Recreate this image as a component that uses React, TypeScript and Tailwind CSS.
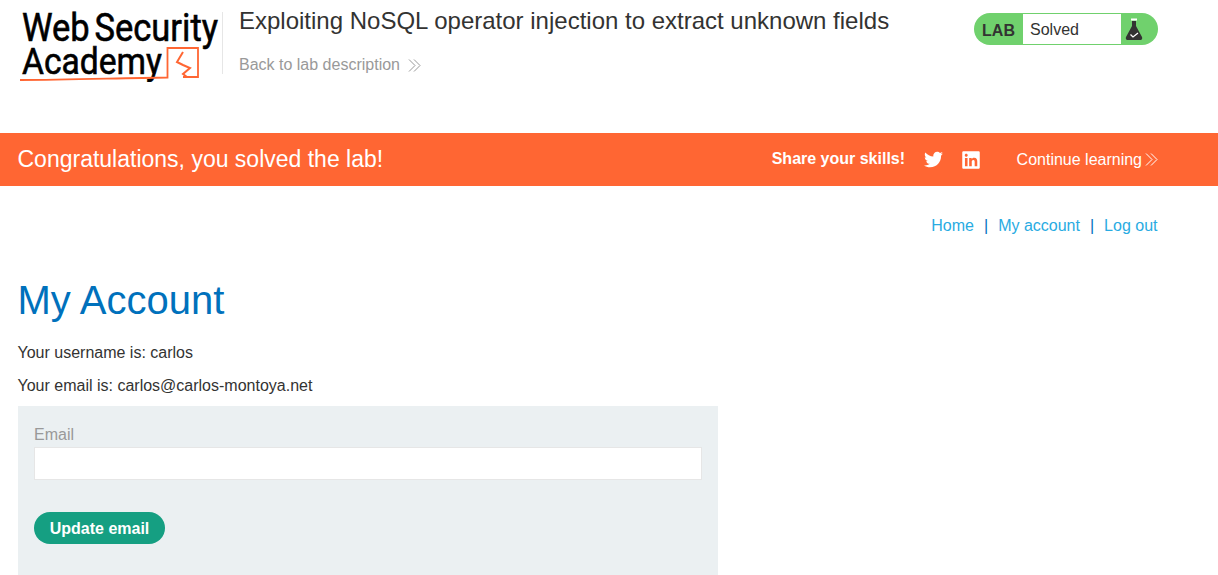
import { FaLinkedin, FaTwitter } from "react-icons/fa";

const sans = "font-['Liberation_Sans',Arial,sans-serif]";

function Chevrons({ className }: { className: string }) {
  return (
    <svg className={className} viewBox="0 0 13 14" fill="none" stroke="currentColor" strokeWidth={1}>
      <path d="M1 1l6 6-6 6" />
      <path d="M6 1l6 6-6 6" />
    </svg>
  );
}

function Logo() {
  return (
    <svg className="w-[200px] h-[72px] shrink-0" viewBox="0 0 200 72" fill="none">
      <text x="2" y="31" fill="#000" fontFamily="Roboto, sans-serif" fontSize="38" fontWeight="400" stroke="#000" strokeWidth={0.6} wordSpacing="-4" textLength="196" lengthAdjust="spacingAndGlyphs">
        Web Security
      </text>
      <text x="2" y="64" fill="#000" fontFamily="Roboto, sans-serif" fontSize="37" fontWeight="400" stroke="#000" strokeWidth={0.6} textLength="140" lengthAdjust="spacingAndGlyphs">
        Academy
      </text>
      <path d="M0 70C50 70 100 68 147.500 67.500V38H178V67H163" stroke="#ff6633" strokeWidth={1.8} />
      <path d="M163 42L157 52L163 55L170 58L163 64L167 67" stroke="#ff6633" strokeWidth={2} />
    </svg>
  );
}

function Flask() {
  return (
    <svg className="w-[18px] h-[24px]" viewBox="0 0 18 24">
      <rect x="6" y="1.500" width="6" height="2" fill="#fff" />
      <path d="M7 4h4v5l6 11c.6 1.300 0 3-1.500 3h-13C1 23 .4 21.300 1 20l6-11z" fill="#333332" />
      <path d="M5.500 17.500l2.500 2.500 5-4" stroke="#fff" strokeWidth={1.300} fill="none" />
    </svg>
  );
}

export default function App() {
  return (
    <div className={`${sans} h-screen overflow-hidden bg-white text-[#333332] flex flex-col`}>
      {/* Lab header */}
      <header className="h-[133px] flex items-start pl-5 pr-[60px] shrink-0">
        <div className="pt-2.5">
          <Logo />
        </div>
        <div className="ml-[2px] mt-3 h-[62px] border-l border-[#e6e6e6] pl-4 grow">
          <h2 className="text-2xl leading-[28px] -mt-[5px]">Exploiting NoSQL operator injection to extract unknown fields</h2>
          <a className="flex items-center gap-2 mt-[19px] text-base leading-[22px] text-[#999]">
            Back to lab description
            <Chevrons className="w-[13px] h-[15px]" />
          </a>
        </div>
        <div className="mt-[13px] w-[184px] h-8 rounded-full bg-[#70d16d] flex items-stretch overflow-hidden shrink-0">
          <span className="w-[49px] text-center font-bold text-base leading-[35px]">LAB</span>
          <span className="w-[98px] my-px bg-white pl-[7px] text-base leading-[31px]">Solved</span>
          <span className="grow flex items-center pl-[4px]">
            <Flask />
          </span>
        </div>
      </header>

      {/* Solved banner */}
      <section className="h-[53px] shrink-0 bg-[#ff6633] text-white flex items-center pl-[17.5px] pr-[60px]">
        <h4 className="text-[23px] grow">Congratulations, you solved the lab!</h4>
        <span className="font-bold text-base -mt-[2px]">Share your skills!</span>
        <FaTwitter className="ml-[19px] w-[19px] h-[19px]" />
        <FaLinkedin className="ml-[18px] w-[20px] h-[20px]" />
        <a className="ml-[35.5px] text-base flex items-center gap-[3px]">
          Continue learning
          <Chevrons className="w-[13px] h-[15px]" />
        </a>
      </section>

      <main className="grow flex flex-col pl-[17.5px] pr-[60.5px]">
        <nav className="mt-[31px] flex justify-end text-base leading-[18px] text-[#29abe2]">
          <a>Home</a>
          <span className="mx-[10px] text-[#0071bc]">|</span>
          <a>My account</a>
          <span className="mx-[10px] text-[#0071bc]">|</span>
          <a>Log out</a>
        </nav>

        <h1 className="mt-[42px] text-[40px] leading-[46px] text-[#0071bc]">My Account</h1>
        <p className="mt-[20px] text-base leading-[20px]">Your username is: carlos</p>
        <p className="mt-[13px] text-base leading-[20px]">Your email is: carlos@carlos-montoya.net</p>

        <form className="mt-[10px] w-[700.5px] grow bg-[#ebf0f2] px-[16.5px] pt-5">
          <label className="block text-base leading-[18px] text-[#999]">Email</label>
          <input className="block mt-[3px] w-full h-[33px] bg-white border border-[#e6e6e6]" type="email" />
          <button className="mt-8 h-8 w-[131px] rounded-full bg-[#159f82] text-white font-bold text-base pt-px" type="button">
            Update email
          </button>
        </form>
      </main>
    </div>
  );
}
